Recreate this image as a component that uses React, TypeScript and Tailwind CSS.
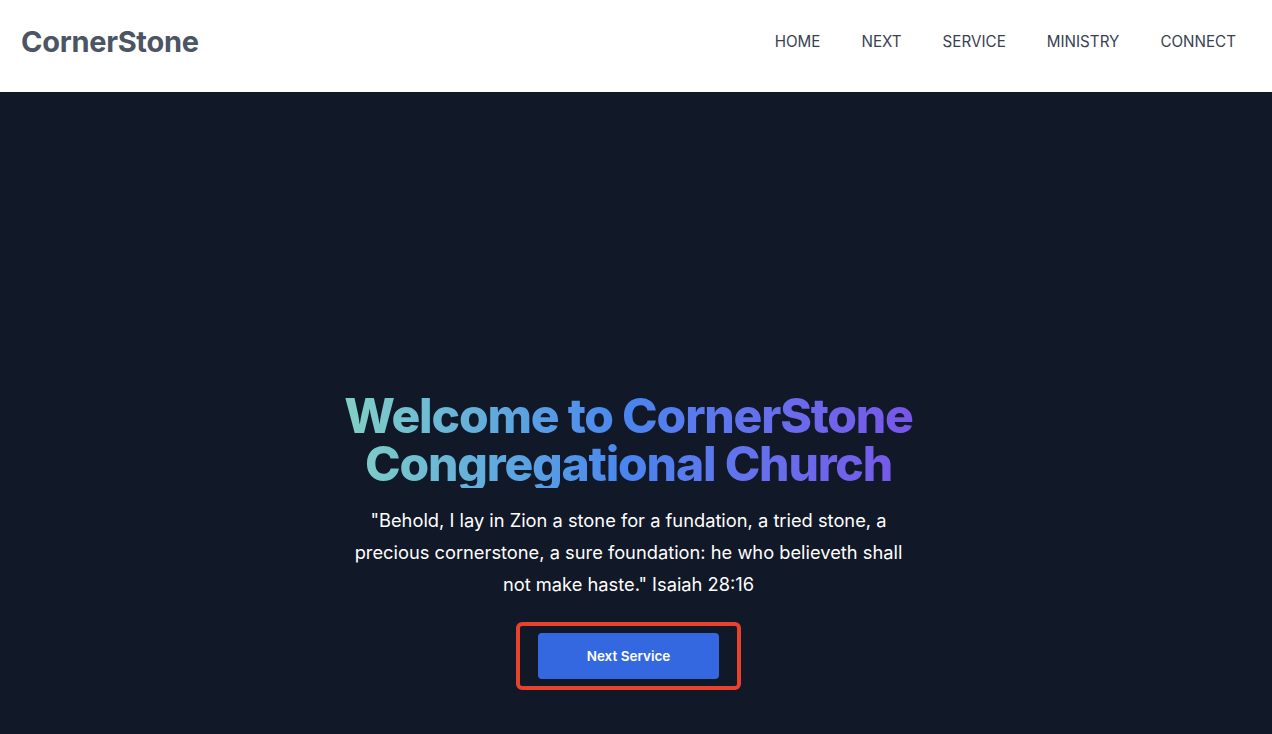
import React from "react";

export default function App() {
  const nav = ["HOME", "NEXT", "SERVICE", "MINISTRY", "CONNECT"];
  return (
    <div className="min-h-screen bg-[#111827]" style={{ fontFamily: "Inter, 'Noto Sans', sans-serif" }}>
      <header className="flex h-[92px] items-center justify-between bg-white pb-2 pl-[21px] pr-9">
        <div className="text-[29px] font-bold tracking-[-0.01em] text-[#4b5563]">CornerStone</div>
        <nav className="flex items-center gap-[41px] text-[15.2px] text-[#374151]">
          {nav.map((n) => (
            <a key={n} href="#" className="leading-6">
              {n}
            </a>
          ))}
        </nav>
      </header>
      <main className="flex flex-col items-center pl-4 pr-[31px] pt-[300px] pb-10">
        <h1 className="bg-gradient-to-r from-[#82d0c4] via-[#4a84ef] to-[#7856e8] bg-clip-text text-center text-5xl leading-none font-extrabold tracking-[-0.025em] text-transparent">
          Welcome to CornerStone
          <br />
          Congregational Church
        </h1>
        <p className="mt-4 max-w-xl text-center text-[18.3px] leading-8 text-white">
          "Behold, I lay in Zion a stone for a fundation, a tried stone, a precious cornerstone, a sure foundation: he who believeth shall not make haste." Isaiah 28:16
        </p>
        <div className="mt-[22px] rounded-md border-4 border-[#e8412c] px-[18px] py-[7px]">
          <button className="h-[46px] w-[181px] rounded bg-[#3468e0] text-[13.5px] font-semibold text-white">
            Next Service
          </button>
        </div>
      </main>
    </div>
  );
}
